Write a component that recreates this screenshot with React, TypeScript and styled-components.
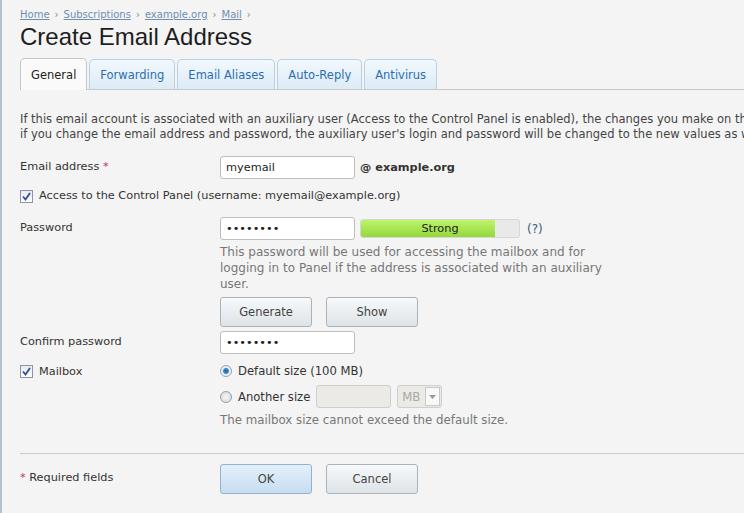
import styled, { createGlobalStyle } from "styled-components";

const GlobalStyle = createGlobalStyle`
  html, body {
    margin: 0;
    padding: 0;
    background: #f4f4f4;
    overflow: hidden;
  }
  body {
    font-family: "DejaVu Sans", Verdana, sans-serif;
    font-size: 11.3px;
    color: #333;
  }
`;

const tabs = ["General", "Forwarding", "Email Aliases", "Auto-Reply", "Antivirus"];
const crumbs = ["Home", "Subscriptions", "example.org", "Mail"];

const CheckMark = () => (
  <svg width="9" height="9" viewBox="0 0 9 9">
    <path d="M1 4.5 L3.5 7.5 L8 1" fill="none" stroke="#2f4f9a" strokeWidth="1.8" />
  </svg>
);

export default function App() {
  return (
    <>
      <GlobalStyle />
      <Page>
        <Crumbs>
          {crumbs.map((c) => (
            <span key={c}>
              <CrumbLink>{c}</CrumbLink>
              <Sep>›</Sep>
            </span>
          ))}
        </Crumbs>
        <Title>Create Email Address</Title>
        <TabBar>
          {tabs.map((t, i) => (
            <Tab key={t} $active={i === 0}>
              {t}
            </Tab>
          ))}
        </TabBar>

        <Intro>
          If this email account is associated with an auxiliary user (Access to the Control Panel is enabled), the changes you make on this page will also apply to the auxiliary user.
          <br />
          if you change the email address and password, the auxiliary user's login and password will be changed to the new values as well.
        </Intro>

        <Row $mt={14}>
          <Label>
            Email address <Req>*</Req>
          </Label>
          <Field>
            <Input defaultValue="myemail" />
            <Domain>@ example.org</Domain>
          </Field>
        </Row>

        <CheckRow $mt={9}>
          <Box>
            <CheckMark />
          </Box>
          Access to the Control Panel (username: myemail@example.org)
        </CheckRow>

        <Row $mt={13}>
          <Label>Password</Label>
          <div>
            <Field>
              <Input type="password" defaultValue="password" />
              <Strength>
                <StrengthFill style={{ width: "85%" }} />
                <StrengthText>Strong</StrengthText>
              </Strength>
              <Hint>(?)</Hint>
            </Field>
            <Help>
              This password will be used for accessing the mailbox and for logging in to Panel if the address is associated with an auxiliary user.
            </Help>
            <Buttons $mt={5}>
              <Button>Generate</Button>
              <Button>Show</Button>
            </Buttons>
          </div>
        </Row>

        <Row $mt={4}>
          <Label>Confirm password</Label>
          <Field>
            <Input type="password" defaultValue="password" />
          </Field>
        </Row>

        <Row $mt={9}>
          <CheckLabel>
            <Box>
              <CheckMark />
            </Box>
            Mailbox
          </CheckLabel>
          <div>
            <RadioRow>
              <Radio $checked />
              Default size (100 MB)
            </RadioRow>
            <RadioRow $mt={6}>
              <Radio />
              Another size
              <SizeInput disabled />
              <Unit>
                <span>MB</span>
                <Arrow>
                  <svg width="7" height="4" viewBox="0 0 7 4">
                    <path d="M0 0 H7 L3.5 4 Z" fill="#9a9a9a" />
                  </svg>
                </Arrow>
              </Unit>
            </RadioRow>
            <Note>The mailbox size cannot exceed the default size.</Note>
          </div>
        </Row>

        <Divider />

        <Row $mt={10}>
          <FootLabel>
            <Req>*</Req> Required fields
          </FootLabel>
          <Buttons>
            <Button $primary>OK</Button>
            <Button>Cancel</Button>
          </Buttons>
        </Row>
      </Page>
    </>
  );
}

const Page = styled.div`
  border-left: 2px solid #b3c0ce;
  padding: 8px 0 0 18px;
  min-height: 505px;
`;

const Crumbs = styled.div`
  font-size: 10px;
  line-height: 14px;
  color: #7b8da0;
`;

const CrumbLink = styled.a`
  color: #6e8fb2;
  text-decoration: underline;
  cursor: pointer;
`;

const Sep = styled.span`
  color: #888;
  margin: 0 5px 0 5px;
  font-size: 10px;
`;

const Title = styled.h1`
  font-family: "Liberation Sans", Arial, sans-serif;
  font-weight: normal;
  font-size: 24px;
  line-height: 28px;
  color: #1e1e1e;
  margin: 1px 0 0;
`;

const TabBar = styled.div`
  display: flex;
  align-items: flex-end;
  gap: 2px;
  margin-top: 7px;
  border-bottom: 1px solid #c8c8c8;
  height: 31px;
`;

const Tab = styled.div<{ $active?: boolean }>`
  height: 30px;
  box-sizing: border-box;
  padding: 0 10px;
  display: flex;
  align-items: center;
  font-size: 11.5px;
  border: 1px solid ${(p) => (p.$active ? "#c6c6c6" : "#b9d1e3")};
  border-bottom: none;
  border-radius: 5px 5px 0 0;
  color: ${(p) => (p.$active ? "#222" : "#2c6eb4")};
  background: ${(p) =>
    p.$active ? "#fafafa" : "linear-gradient(#f2f8fd, #dcebf6)"};
  ${(p) => (p.$active ? "height: 32px; margin-bottom: -1px;" : "")}
`;

const Intro = styled.p`
  margin: 22px 0 0;
  white-space: nowrap;
  font-size: 11.5px;
  line-height: 15px;
  color: #444;
`;

const Row = styled.div<{ $mt?: number }>`
  display: grid;
  grid-template-columns: 200px 1fr;
  margin-top: ${(p) => p.$mt ?? 0}px;
`;

const Label = styled.div`
  padding-top: 3px;
  line-height: 16px;
  color: #333;
`;

const Req = styled.span`
  color: #c0306a;
`;

const Field = styled.div`
  display: flex;
  align-items: center;
`;

const Input = styled.input`
  width: 135px;
  height: 23px;
  box-sizing: border-box;
  border: 1px solid #bdbdbd;
  border-radius: 3px;
  background: #fff;
  padding: 0 5px;
  font-family: "DejaVu Sans", Verdana, sans-serif;
  font-size: 11.3px;
  color: #222;
  outline: none;
`;

const Domain = styled.span`
  margin-left: 5px;
  font-weight: bold;
  color: #333;
`;

const CheckRow = styled.div<{ $mt?: number }>`
  display: flex;
  align-items: center;
  gap: 6px;
  margin-top: ${(p) => p.$mt ?? 0}px;
  line-height: 16px;
`;

const CheckLabel = styled.div`
  display: flex;
  align-items: center;
  gap: 6px;
  height: 16px;
`;

const Box = styled.span`
  width: 13px;
  height: 13px;
  box-sizing: border-box;
  border: 1px solid #8c95a6;
  background: linear-gradient(#e8eaee, #ffffff);
  display: flex;
  align-items: center;
  justify-content: center;
`;

const Strength = styled.div`
  position: relative;
  width: 160px;
  height: 19px;
  box-sizing: border-box;
  margin-left: 5px;
  border: 1px solid #d6d6d6;
  border-radius: 3px;
  background: #e9e9e9;
  overflow: hidden;
`;

const StrengthFill = styled.div`
  height: 100%;
  background: linear-gradient(#bdf26d, #96d93b);
`;

const StrengthText = styled.span`
  position: absolute;
  inset: 0;
  display: flex;
  align-items: center;
  justify-content: center;
  color: #222;
  font-size: 11.3px;
`;

const Hint = styled.span`
  margin-left: 7px;
  color: #3d5a80;
  font-size: 12px;
`;

const Help = styled.div`
  width: 400px;
  margin-top: 4px;
  font-size: 12px;
  line-height: 16px;
  color: #777;
`;

const Buttons = styled.div<{ $mt?: number }>`
  display: flex;
  gap: 14px;
  margin-top: ${(p) => p.$mt ?? 0}px;
`;

const Button = styled.button<{ $primary?: boolean }>`
  width: 92px;
  height: 30px;
  box-sizing: border-box;
  border: 1px solid ${(p) => (p.$primary ? "#92b2cf" : "#aab3bc")};
  border-radius: 3px;
  background: ${(p) =>
    p.$primary
      ? "linear-gradient(#e4f0fa, #c6ddf1)"
      : "linear-gradient(#f7f9fa, #dde3e8)"};
  font-family: "DejaVu Sans", Verdana, sans-serif;
  font-size: 11.5px;
  color: #444;
  cursor: pointer;
`;

const RadioRow = styled.div<{ $mt?: number }>`
  display: flex;
  align-items: center;
  gap: 6px;
  height: ${(p) => (p.$mt ? 23 : 16)}px;
  margin-top: ${(p) => p.$mt ?? 0}px;
  font-size: 11.6px;
  color: #333;
`;

const Radio = styled.span<{ $checked?: boolean }>`
  width: 12px;
  height: 12px;
  box-sizing: border-box;
  border-radius: 50%;
  border: 1px solid #9aa0a8;
  background: ${(p) =>
    p.$checked
      ? "radial-gradient(circle, #1f5f9a 0, #3a8fd0 2.5px, #e8ecf0 3.5px, #f4f6f8 6px)"
      : "radial-gradient(circle, #f6f6f6 0, #d8dadd 6px)"};
`;

const SizeInput = styled.input`
  width: 75px;
  height: 23px;
  box-sizing: border-box;
  border: 1px solid #cfcfcf;
  border-radius: 3px;
  background: #ebeae4;
`;

const Unit = styled.div`
  width: 45px;
  height: 23px;
  box-sizing: border-box;
  border: 1px solid #cfcfcf;
  border-radius: 3px;
  background: #ebeae4;
  display: flex;
  align-items: center;
  justify-content: space-between;
  padding: 0 1px 0 4px;
  color: #a8a8a8;
`;

const Arrow = styled.span`
  width: 15px;
  height: 19px;
  box-sizing: border-box;
  border: 1px solid #c8c8c8;
  background: #f8f8f8;
  display: flex;
  align-items: center;
  justify-content: center;
`;

const Note = styled.div`
  margin-top: 4px;
  line-height: 16px;
  font-size: 11.8px;
  color: #777;
`;

const Divider = styled.div`
  margin-top: 25px;
  border-top: 1px solid #cacaca;
`;

const FootLabel = styled.div`
  padding-top: 6px;
  line-height: 15px;
  color: #333;
`;
